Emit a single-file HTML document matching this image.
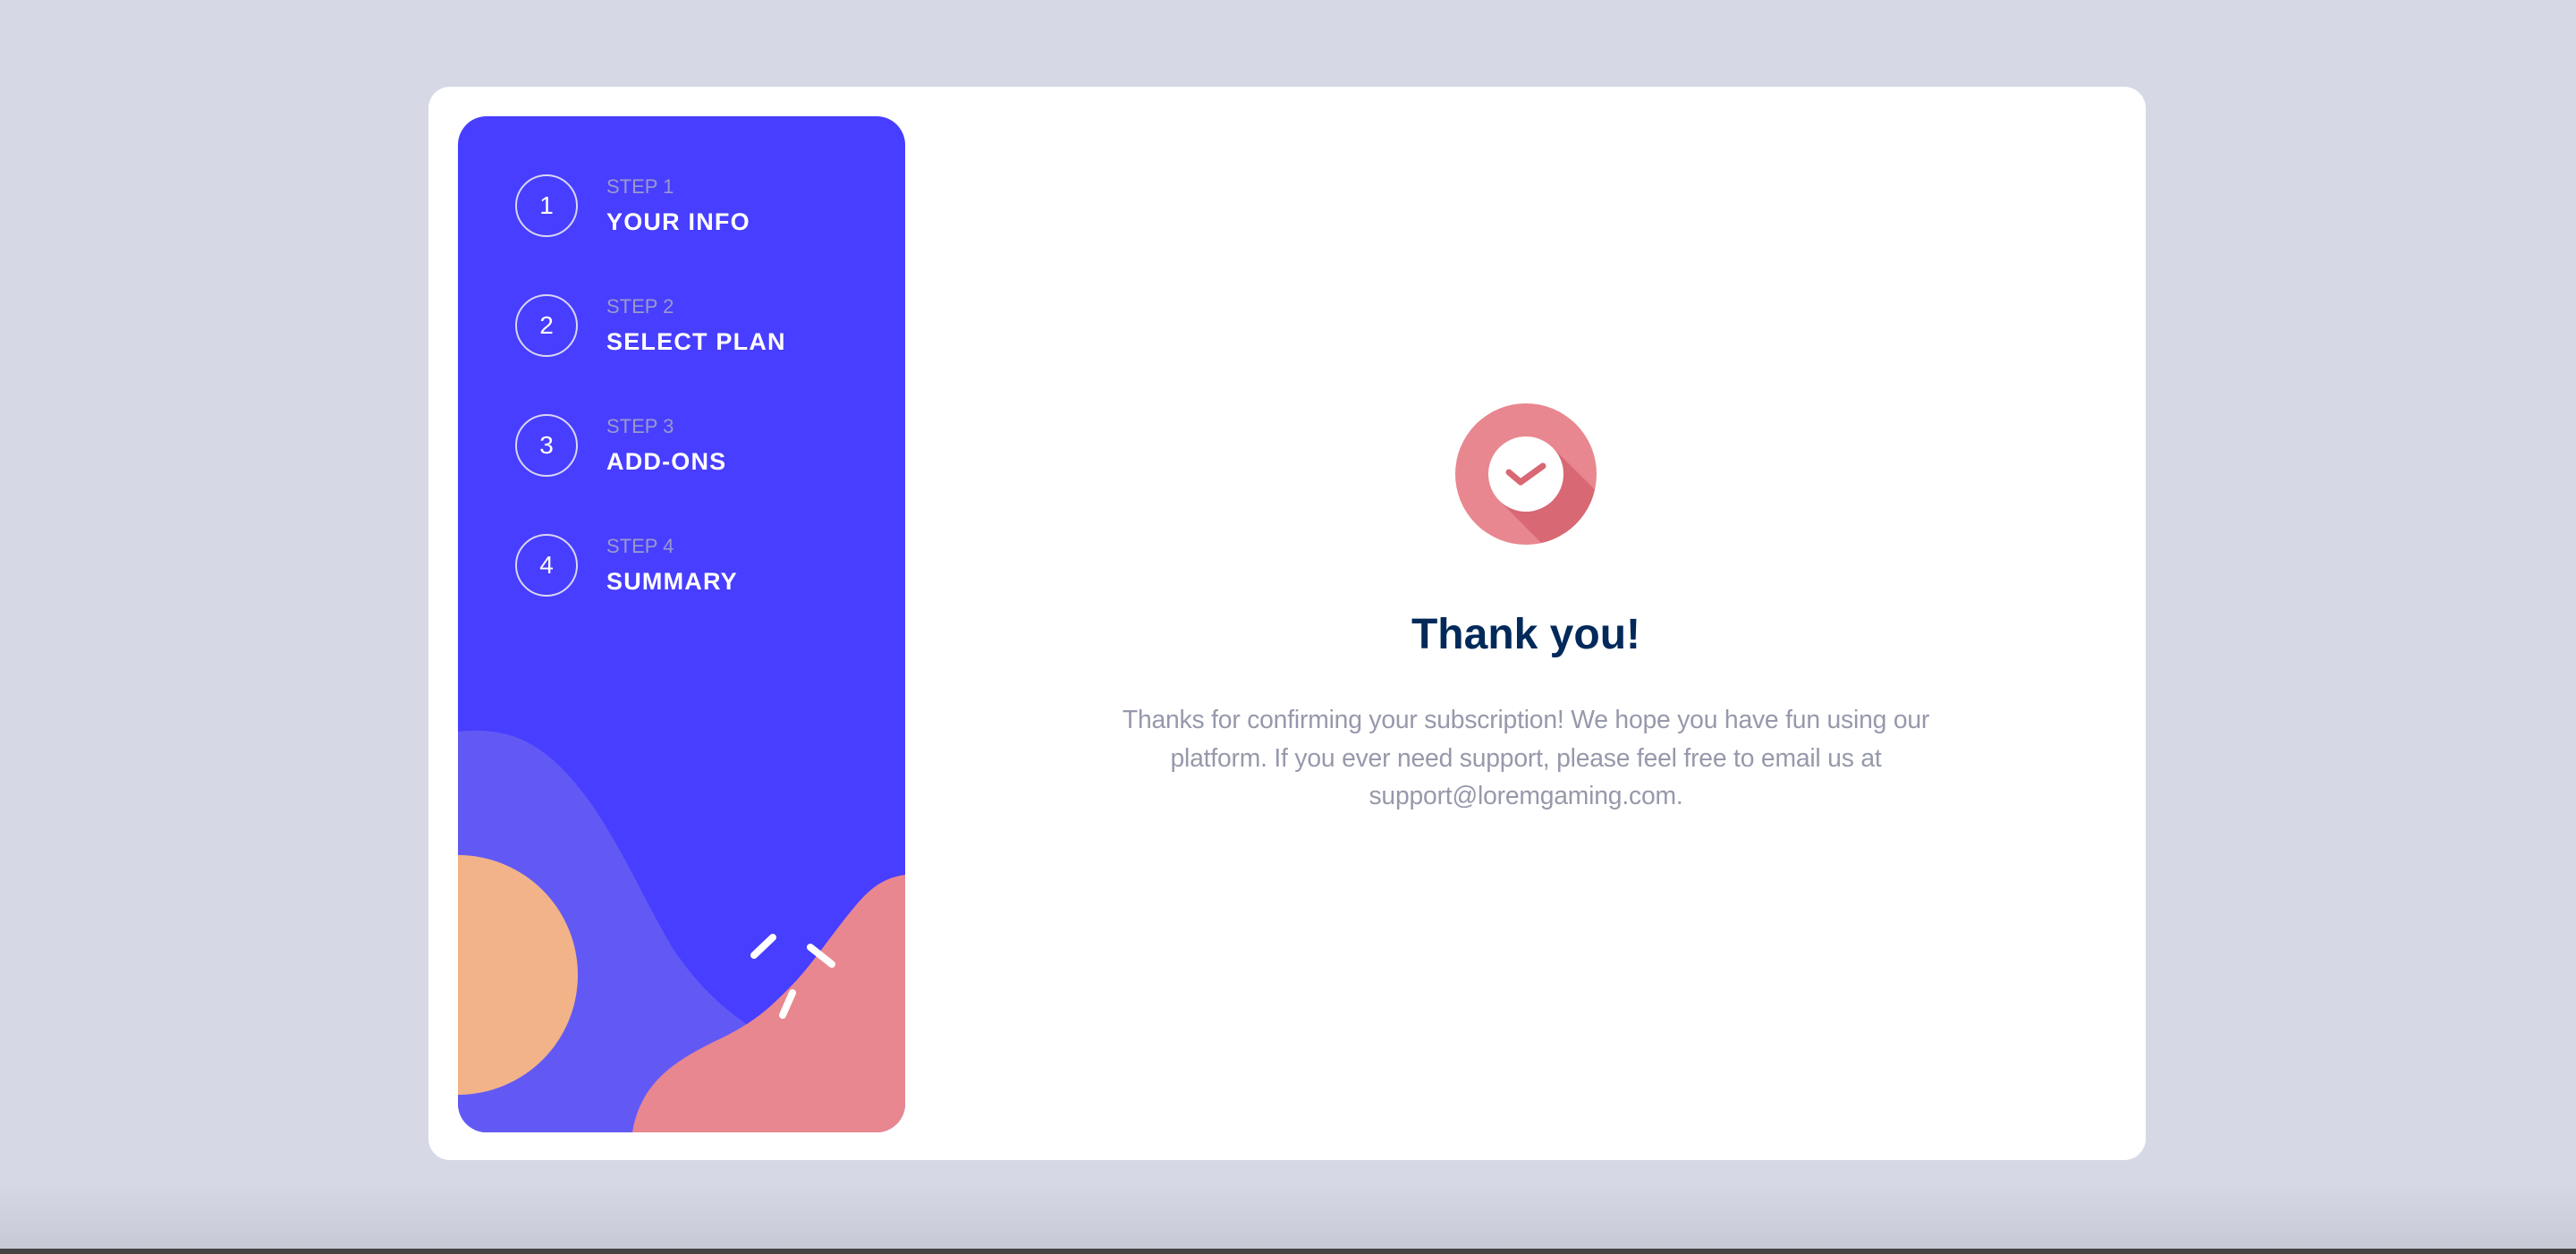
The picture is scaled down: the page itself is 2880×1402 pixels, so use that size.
<!DOCTYPE html>
<html><head><meta charset="utf-8"><style>
html,body{margin:0;padding:0;}
body{width:2880px;height:1402px;background:#d6d8e5;position:relative;overflow:hidden;font-family:"Liberation Sans",sans-serif;}
.bar{position:absolute;left:0;right:0;bottom:0;height:80px;background:linear-gradient(#d6d8e5,#c6c8d4);}
.dark{position:absolute;left:0;right:0;bottom:0;height:6px;background:#444;}
.card{position:absolute;left:479px;top:97px;width:1920px;height:1200px;background:#fff;border-radius:24px;}
.side{position:absolute;left:512px;top:130px;width:500px;height:1136px;border-radius:32px;overflow:hidden;background:#483eff;}
.step{position:absolute;left:0;}
.num{position:absolute;left:64px;width:66px;height:66px;border:2px solid #d8d6f5;border-radius:50%;color:#fff;font-size:28px;text-align:center;line-height:66px;}
.lbl{position:absolute;left:166px;top:0;color:#9b99cc;font-size:22px;white-space:nowrap;}
.ttl{position:absolute;left:166px;top:37px;color:#fff;font-size:27px;font-weight:bold;letter-spacing:1.2px;white-space:nowrap;}
h1{position:absolute;left:1300px;width:812px;top:682px;margin:0;text-align:center;font-size:48px;color:#02295a;font-weight:bold;}
p{position:absolute;left:1160px;width:1092px;top:783px;margin:0;text-align:center;font-size:28.3px;line-height:42.5px;color:#9699ab;white-space:nowrap;letter-spacing:-0.2px;}
</style></head><body>
<div class="bar"></div><div class="dark"></div>
<div class="card"></div>
<div class="side">
<svg width="500" height="1136" viewBox="0 0 500 1136" style="position:absolute;left:0;top:0">
<path d="M0 688 C60 682 100 700 150 770 C190 830 210 880 240 930 C270 975 300 1000 330 1020 L330 1136 L0 1136 Z" fill="#6259f5"/>
<circle cx="0" cy="960" r="134" fill="#f2b388"/>
<path d="M500 848 C470 852 455 870 440 888 C410 925 395 950 370 975 C350 995 335 1010 300 1028 C250 1052 205 1075 195 1136 L500 1136 Z" fill="#e8878f"/>
<g stroke="#fff" stroke-width="8" stroke-linecap="round">
<line x1="331" y1="938" x2="352" y2="918"/>
<line x1="394" y1="929" x2="418" y2="948"/>
<line x1="374" y1="980" x2="363" y2="1005"/>
</g>
</svg>
<div class="step" style="top:65px"><div class="num" style="top:0">1</div></div>
<div class="step" style="top:199px"><div class="num" style="top:0">2</div></div>
<div class="step" style="top:333px"><div class="num" style="top:0">3</div></div>
<div class="step" style="top:467px"><div class="num" style="top:0">4</div></div>
<div class="step" style="top:66px;width:500px"><div class="lbl">STEP 1</div><div class="ttl">YOUR INFO</div></div>
<div class="step" style="top:200px;width:500px"><div class="lbl">STEP 2</div><div class="ttl">SELECT PLAN</div></div>
<div class="step" style="top:334px;width:500px"><div class="lbl">STEP 3</div><div class="ttl">ADD-ONS</div></div>
<div class="step" style="top:468px;width:500px"><div class="lbl">STEP 4</div><div class="ttl">SUMMARY</div></div>
</div>
<svg width="170" height="170" viewBox="-85 -85 170 170" style="position:absolute;left:1621px;top:445px">
<defs><clipPath id="c"><circle cx="0" cy="0" r="79"/></clipPath></defs>
<circle cx="0" cy="0" r="79" fill="#e8878f"/>
<g clip-path="url(#c)"><path d="M29.7 -29.7 L130 70 L70 130 L-29.7 29.7 Z" fill="#d86873"/></g>
<circle cx="0" cy="0" r="42" fill="#fff"/>
<path d="M-19 -2 L-6 9 L19 -9" fill="none" stroke="#d86873" stroke-width="7" stroke-linecap="round" stroke-linejoin="round"/>
</svg>
<h1>Thank you!</h1>
<p>Thanks for confirming your subscription! We hope you have fun using our<br>platform. If you ever need support, please feel free to email us at<br>support@loremgaming.com.</p>
</body></html>
